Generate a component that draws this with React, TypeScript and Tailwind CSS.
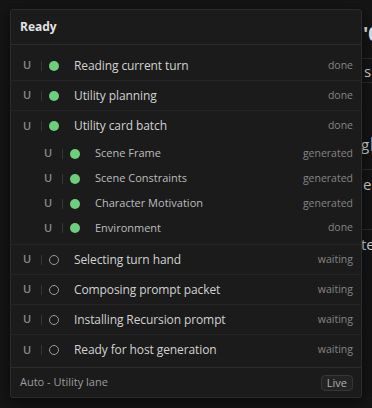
import React from "react";

type Step = {
  label: string;
  status: string;
  done: boolean;
  sub?: boolean;
};

const steps: Step[] = [
  { label: "Reading current turn", status: "done", done: true },
  { label: "Utility planning", status: "done", done: true },
  { label: "Utility card batch", status: "done", done: true },
  { label: "Scene Frame", status: "generated", done: true, sub: true },
  { label: "Scene Constraints", status: "generated", done: true, sub: true },
  { label: "Character Motivation", status: "generated", done: true, sub: true },
  { label: "Environment", status: "done", done: true, sub: true },
  { label: "Selecting turn hand", status: "waiting", done: false },
  { label: "Composing prompt packet", status: "waiting", done: false },
  { label: "Installing Recursion prompt", status: "waiting", done: false },
  { label: "Ready for host generation", status: "waiting", done: false },
];

function StepRow({ step, last, nextSub }: { step: Step; last: boolean; nextSub: boolean }) {
  const border = !last && !nextSub;
  const groupEnd = step.sub && !nextSub;
  return (
    <div
      className={
        "flex items-center pr-[8px] " +
        (step.sub ? "pl-[33px] " : "h-[30px] pl-[12px] ") +
        (step.sub ? (groupEnd ? "h-[29px] pb-[4px]" : "h-[25px]") : "") +
        (border ? " border-b border-[#252525]" : "")
      }
    >
      <span className="w-[8px] text-center text-[11px] font-semibold text-[#8a8a8a]">U</span>
      <span className="ml-[10px] h-[10px] w-px bg-[#363636]" />
      {step.done ? (
        <span className="ml-[7px] h-[10px] w-[10px] shrink-0 rounded-full bg-[#6ccf7c]" />
      ) : (
        <span className="ml-[7px] h-[10px] w-[10px] shrink-0 rounded-full border border-[#9a9a9a]" />
      )}
      <span
        className={
          "ml-[15px] flex-1 truncate " +
          (step.sub ? "text-[11px] text-[#bdbdbd]" : "text-[12px] tracking-[-0.1px] text-[#d2d2d2]")
        }
      >
        {step.label}
      </span>
      <span className="text-[10.5px] text-[#858585]">{step.status}</span>
    </div>
  );
}

export default function App() {
  return (
    <div
      className="relative h-[408px] w-[372px] overflow-hidden bg-[#151515]"
      style={{ fontFamily: '"Open Sans", "Noto Sans", sans-serif' }}
    >
      {/* page content peeking out behind the popover */}
      <div className="flex flex-col pl-[361px] pt-[12px] text-[#d8d8d8]">
        <div className="h-[46px] border-l border-[#2e2e2e] pl-[1px] pt-[10px] text-[20px] font-bold leading-[24px] text-[#ececec]">
          '0
        </div>
        <div className="h-[24px] border-l border-t border-[#2e2e2e] pl-[2px] pt-[2px] text-[15px] leading-[20px]">
          s
        </div>
        <div className="h-[50px] border-t border-[#2a2a2a]" />
        <div className="flex h-[24px] items-center gap-[2px] text-[15px]">
          <span>g</span>
          <span className="h-[14px] w-[4px] bg-[#4a8fe0]" />
        </div>
        <div className="h-[13px]" />
        <div className="h-[24px] border-t border-[#2e2e2e] pl-[2px] pt-[4px] text-[15px] leading-[20px]">e</div>
        <div className="h-[36px]" />
        <div className="h-[24px] border-t border-[#2e2e2e] pt-[4px] text-[15px] leading-[20px]">te</div>
      </div>

      {/* popover */}
      <div className="absolute left-[10px] top-[9px] flex w-[352px] flex-col rounded-[3px] border border-[#2b2b2b] bg-[#1b1b1b] shadow-[0_4px_16px_rgba(0,0,0,0.6)]">
        <div className="flex h-[35px] items-center border-b border-[#2c2c2c] px-[9px] text-[12px] font-bold text-[#e2e2e2]">
          Ready
        </div>
        <div className="flex flex-col pt-[6px] pb-[2px]">
          {steps.map((s, i) => (
            <StepRow
              key={s.label}
              step={s}
              last={i === steps.length - 1}
              nextSub={!!steps[i + 1]?.sub}
            />
          ))}
        </div>
        <div className="flex h-[30px] items-center justify-between border-t border-[#2c2c2c] pl-[9px] pr-[8px]">
          <span className="text-[11px] text-[#9c9c9c]">Auto - Utility lane</span>
          <span className="rounded-[4px] border border-[#363636] bg-[#232323] px-[5px] text-[11px] leading-[14px] text-[#b0b0b0]">
            Live
          </span>
        </div>
      </div>
    </div>
  );
}
